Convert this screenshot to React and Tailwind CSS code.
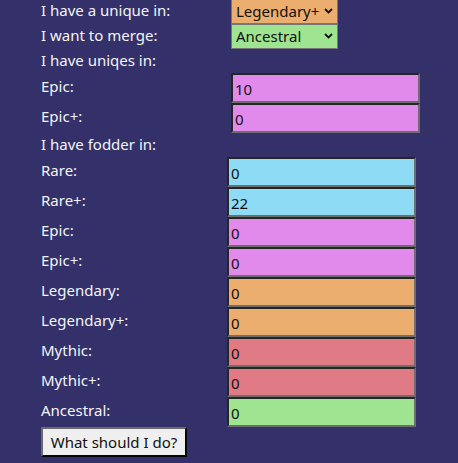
import { useState } from 'react';

const font = { fontFamily: '"Noto Sans", "Open Sans", sans-serif' };

const uniqueRows = [
  { label: 'Epic:', value: '10', bg: 'bg-[#e28aeb]' },
  { label: 'Epic+:', value: '0', bg: 'bg-[#e28aeb]' },
];

const fodderRows = [
  { label: 'Rare:', value: '0', bg: 'bg-[#8edbf5]' },
  { label: 'Rare+:', value: '22', bg: 'bg-[#8edbf5]' },
  { label: 'Epic:', value: '0', bg: 'bg-[#e28aeb]' },
  { label: 'Epic+:', value: '0', bg: 'bg-[#e28aeb]' },
  { label: 'Legendary:', value: '0', bg: 'bg-[#ebae6e]' },
  { label: 'Legendary+:', value: '0', bg: 'bg-[#ebae6e]' },
  { label: 'Mythic:', value: '0', bg: 'bg-[#e07a85]' },
  { label: 'Mythic+:', value: '0', bg: 'bg-[#e07a85]' },
  { label: 'Ancestral:', value: '0', bg: 'bg-[#9ee491]' },
];

const Chevron = () => (
  <svg className="pointer-events-none absolute right-[5px] top-[9px]" width="9" height="6" viewBox="0 0 9 6">
    <path d="M1 1 L4.5 4.5 L8 1" fill="none" stroke="#111" strokeWidth="1.8" />
  </svg>
);

const Select = ({ value, bg, options }) => (
  <div className="relative w-[107px] h-[25px]">
    <select
      defaultValue={value}
      className={`appearance-none w-full h-full border border-[#767676] ${bg} text-[15px] leading-[21px] text-[#111] pl-[4px] py-0 outline-none`}
      style={font}
    >
      {options.map((o) => (
        <option key={o}>{o}</option>
      ))}
    </select>
    <Chevron />
  </div>
);

const NumberRow = ({ label, value, bg, labelWidth }) => {
  const [val, setVal] = useState(value);
  return (
    <div className="flex items-center h-[30px]">
      <div className={`${labelWidth} pb-[3px] text-[15px]`}>{label}</div>
      <input
        value={val}
        onChange={(e) => setVal(e.target.value)}
        className={`w-[189px] h-[30px] ${bg} border-2 border-t-[#262626] border-l-[#262626] border-r-[#6e6e6e] border-b-[#6e6e6e] pl-[2px] pt-[2px] text-[15px] text-[#111] outline-none`}
        style={font}
      />
    </div>
  );
};

export default function App() {
  const tiers = ['Rare', 'Rare+', 'Epic', 'Epic+', 'Legendary', 'Legendary+', 'Mythic', 'Mythic+', 'Ancestral'];
  return (
    <div className="w-[458px] h-[463px] bg-[#33306a] text-[#f4f4f4] pl-[41px] overflow-hidden" style={font}>
      <div className="-mt-px">
        <div className="flex items-center h-[25px]">
          <div className="w-[190px] text-[15px] pb-[2px]">I have a unique in:</div>
          <Select value="Legendary+" bg="bg-[#ebae6e]" options={tiers} />
        </div>
        <div className="flex items-center h-[25px]">
          <div className="w-[190px] text-[15px] pb-[2px]">I want to merge:</div>
          <Select value="Ancestral" bg="bg-[#9ee491]" options={tiers} />
        </div>
      </div>
      <div className="h-[24px] flex items-center text-[15px] pb-[1px]">I have uniqes in:</div>
      {uniqueRows.map((r, i) => (
        <NumberRow key={i} {...r} labelWidth="w-[190px]" />
      ))}
      <div className="h-[24px] flex items-center text-[15px] pb-[1px]">I have fodder in:</div>
      {fodderRows.map((r, i) => (
        <NumberRow key={i} {...r} labelWidth="w-[186px]" />
      ))}
      <button
        className="h-[30px] w-[146px] bg-[#efefef] text-[#111] text-[15px] border-2 border-t-[#6b6b6b] border-l-[#6b6b6b] border-r-[#050505] border-b-[#050505]"
        style={font}
      >
        What should I do?
      </button>
    </div>
  );
}
